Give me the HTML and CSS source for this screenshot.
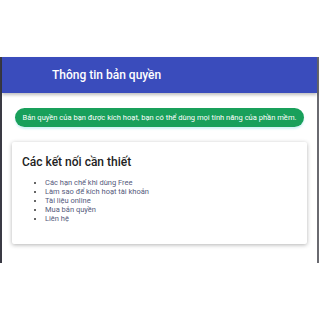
FILE: index.html
```html
<!DOCTYPE html>
<html lang="vi">
<head>
<meta charset="utf-8">
<link rel="stylesheet" href="styles.css">
</head>
<body>
<div class="frame">
  <header class="topbar">
    <h1 class="title">Thông tin bản quyền</h1>
  </header>
  <div class="content">
    <div class="alert">Bản quyền của bạn được kích hoạt, bạn có thể dùng mọi tính năng của phần mềm.</div>
    <div class="card">
      <h2 class="card-title">Các kết nối cần thiết</h2>
      <ul class="links">
        <li><span class="link">Các hạn chế khi dùng Free</span></li>
        <li><span class="link">Làm sao để kích hoạt tài khoản</span></li>
        <li><span class="link">Tài liệu online</span></li>
        <li><span class="link">Mua bản quyền</span></li>
        <li><span class="link">Liên hệ</span></li>
      </ul>
    </div>
  </div>
</div>
</body>
</html>
```
FILE: styles.css
```css
html, body {
  margin: 0;
  padding: 0;
  background: #ffffff;
  font-family: Roboto, "Liberation Sans", sans-serif;
}
.frame {
  margin-top: 57px;
  height: 206px;
  border-left: 2px solid #3a3a44;
  border-right: 2px solid #6a6a70;
  margin-right: 1px;
  box-sizing: border-box;
  display: flex;
  flex-direction: column;
}
.topbar {
  height: 36px;
  background: #3a4cbc;
  display: flex;
  align-items: center;
  padding-left: 50px;
  box-shadow: 0 2px 3px rgba(0,0,0,0.25);
}
.title {
  margin: 0;
  color: #ffffff;
  font-size: 12px;
  font-weight: 500;
}
.content {
  padding: 15px 10px 0 10px;
  display: flex;
  flex-direction: column;
}
.alert {
  margin: 0 3px;
  height: 19px;
  border-radius: 10px;
  background: #19a05b;
  color: #ffffff;
  font-size: 7.55px;
  white-space: nowrap;
  display: flex;
  align-items: center;
  justify-content: center;
  box-shadow: 0 2px 2px rgba(180,235,240,0.6);
}
.card {
  margin-top: 15px;
  height: 102px;
  box-sizing: border-box;
  background: #fff;
  box-shadow: 0 1px 4px rgba(0,0,0,0.3);
  border-radius: 2px;
  padding: 13px 10px;
}
.card-title {
  margin: 0 0 9px;
  font-size: 12px;
  font-weight: 500;
  color: #222;
}
.links {
  margin: 0;
  padding-left: 23px;
  font-size: 7.5px;
  line-height: 9px;
  color: #333;
}
.link {
  color: #555a7c;
}
```
